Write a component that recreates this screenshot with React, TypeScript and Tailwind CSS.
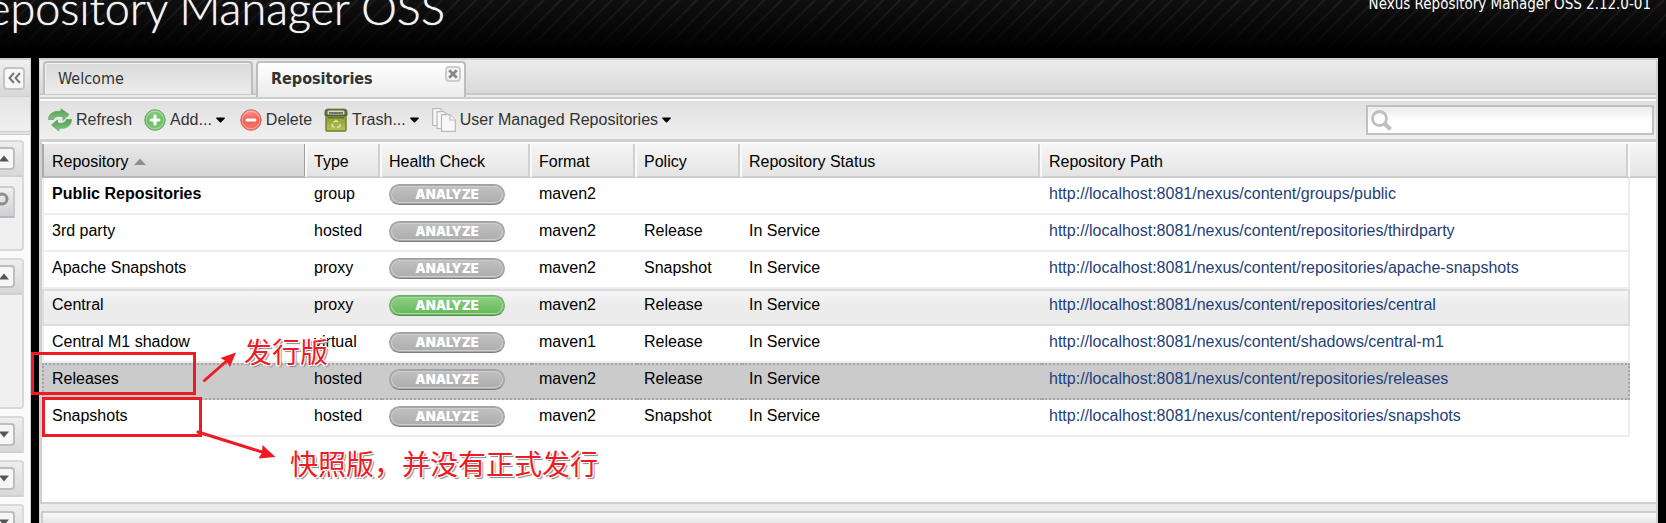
import React from "react";

type Repo = {
  name: string;
  type: string;
  format: string;
  policy: string;
  status: string;
  path: string;
  bold?: boolean;
  analyzable?: boolean;
  look?: "hover" | "selected";
};

const BASE = "http://localhost:8081/nexus/content/";

const repos: Repo[] = [
  { name: "Public Repositories", type: "group", format: "maven2", policy: "", status: "", path: "groups/public", bold: true },
  { name: "3rd party", type: "hosted", format: "maven2", policy: "Release", status: "In Service", path: "repositories/thirdparty" },
  { name: "Apache Snapshots", type: "proxy", format: "maven2", policy: "Snapshot", status: "In Service", path: "repositories/apache-snapshots" },
  { name: "Central", type: "proxy", format: "maven2", policy: "Release", status: "In Service", path: "repositories/central", analyzable: true, look: "hover" },
  { name: "Central M1 shadow", type: "virtual", format: "maven1", policy: "Release", status: "In Service", path: "shadows/central-m1" },
  { name: "Releases", type: "hosted", format: "maven2", policy: "Release", status: "In Service", path: "repositories/releases", look: "selected" },
  { name: "Snapshots", type: "hosted", format: "maven2", policy: "Snapshot", status: "In Service", path: "repositories/snapshots" },
];

const rowLook = {
  plain: "bg-white border-[#ededed]",
  hover: "bg-linear-to-b from-[#f6f6f6] to-[#ececec] to-40% border-[#dddddd] border-t-2",
  selected: "bg-[#cbcbcb] border-[#a5a5a5] border-dotted border-t-2",
};

function Caret() {
  return (
    <svg width="9" height="6" viewBox="0 0 9 6" className="shrink-0" aria-hidden="true">
      <path d="M0 1.2Q0 .5 .8 .5H8.200Q9 .5 9 1.200L4.900 5.600H4.100Z" fill="#000" />
    </svg>
  );
}

function RefreshIcon() {
  return (
    <svg width="24" height="24" viewBox="0 0 24 24" aria-hidden="true">
      <defs>
        <linearGradient id="rf" x1="0" y1="0" x2="0" y2="1">
          <stop offset="0" stopColor="#4f9d55" />
          <stop offset="1" stopColor="#86c684" />
        </linearGradient>
      </defs>
      <g fill="url(#rf)" stroke="#5aa55c" strokeWidth=".7" strokeLinejoin="round">
        <path d="M.5 11.500C.5 5.500 6 2.500 13 3.500V.8L21 6.500L15 12.500V9C10 7.500 7 8.200 5.500 11.500Z" />
        <path d="M23.500 11.500C23.500 18 18 21 11 20.200V23L3.500 17L9.500 11.800V14.800C14 16 17 15 18.500 11.500Z" />
      </g>
    </svg>
  );
}

function RoundIcon({ kind }: { kind: "add" | "delete" }) {
  const add = kind === "add";
  const id = "round-" + kind;
  return (
    <svg width="22" height="24" viewBox="0 0 22 24" aria-hidden="true">
      <defs>
        <linearGradient id={id} x1="0" y1="0" x2="0" y2="1">
          <stop offset="0" stopColor={add ? "#8fce85" : "#f79a90"} />
          <stop offset=".5" stopColor={add ? "#6dbb63" : "#ee5f52"} />
          <stop offset="1" stopColor={add ? "#7cc873" : "#f07a6c"} />
        </linearGradient>
      </defs>
      <circle cx="11" cy="12" r="10.300" fill={`url(#${id})`} stroke={add ? "#67ad62" : "#d8695f"} />
      <circle cx="11" cy="12" r="8.800" fill="none" stroke="#fff" strokeOpacity=".35" strokeWidth="1" />
      <path d={add ? "M7 12H15M11 8V16" : "M7 12H15"} stroke="#fff" strokeWidth="3.200" strokeLinecap="round" />
    </svg>
  );
}

function TrashIcon() {
  return (
    <svg width="24" height="24" viewBox="0 0 24 24" aria-hidden="true">
      <defs>
        <linearGradient id="bin" x1="0" y1="0" x2="0" y2="1">
          <stop offset="0" stopColor="#8a9a38" />
          <stop offset="1" stopColor="#b9c455" />
        </linearGradient>
      </defs>
      <rect x="2" y="8" width="20" height="15" rx="1" fill="url(#bin)" stroke="#6e7d2f" strokeWidth="1.400" />
      <rect x="4" y="9" width="16" height="1.500" fill="#66742b" />
      <path d="M1 7.500V4Q1 1.200 3.500 1.200H20.500Q23 1.200 23 4V7.500Z" fill="#66733a" stroke="#54602c" />
      <rect x="3.500" y="2.500" width="17" height="4" rx="1.500" fill="#d6d8d0" />
      <rect x="5" y="4" width="14" height="2" fill="#6f7270" />
      <g fill="none" stroke="#dfe6a0" strokeWidth="1.400">
        <path d="M9.500 14.500L12 12.500L14.200 14.200M16 16L16 18.300L13 19.300M10.500 19.300L8.200 18.300L8.500 15.800" />
      </g>
    </svg>
  );
}

function PagesIcon() {
  return (
    <svg width="24" height="24" viewBox="0 0 24 24" fill="#f8f8f8" stroke="#b9b9b9" strokeWidth="1.200" aria-hidden="true">
      <path d="M.7 .7H8L11 4V17.500H.7Z" />
      <path d="M5 3.700H12L15.500 7V20.500H5Z" />
      <path d="M9.500 6.700H18L23.300 12V23.300H9.500Z" />
      <path d="M18 6.700V12H23.300" fill="#fff" />
    </svg>
  );
}

function AnalyzeButton({ active }: { active?: boolean }) {
  return (
    <button
      className={
        "flex h-[21px] w-[116px] items-center justify-center rounded-full border font-['Inter',sans-serif] text-[13px] leading-none font-black text-white " +
        (active
          ? "border-[#6fa868] border-b-[#4f8a4a] bg-linear-to-b from-[#8fd085] to-[#62b858] shadow-[inset_0_0_0_1px_#74bd6a,inset_0_0_0_2px_#a4d89b]"
          : "border-[#a0a0a0] border-b-[#7c7c7c] bg-linear-to-b from-[#c2c2c2] to-[#acacac] shadow-[inset_0_0_0_1px_#a9a9a9,inset_0_0_0_2px_#cecece]")
      }
    >
      ANALYZE
    </button>
  );
}

function ToolButton({ icon, label, menu, className }: { icon: React.ReactNode; label: string; menu?: boolean; className: string }) {
  return (
    <button className={"flex items-center text-[#333] " + className}>
      {icon}
      <span>{label}</span>
      {menu && <Caret />}
    </button>
  );
}

function FoldButton({ open }: { open: boolean }) {
  return (
    <button
      aria-label={open ? "Collapse" : "Expand"}
      className="flex h-[23px] w-[22px] shrink-0 items-center justify-center rounded border-2 border-[#bdbdbd] bg-[#f6f6f6]"
    >
      <svg width="10" height="7" viewBox="0 0 10 7" aria-hidden="true">
        <path d={open ? "M0 6.500L5 .5L10 6.500Z" : "M0 .5H10L5 6.500Z"} fill="#555" />
      </svg>
    </button>
  );
}

function SidePanel({ open, children }: { open: boolean; children?: React.ReactNode }) {
  return (
    <section className={"w-[24px] shrink-0 overflow-hidden rounded-tr border-t-2 border-r-2 border-[#d9d9d9] bg-[#f0f0f0] " + (open ? "rounded-br border-b-2" : "")}>
      <header className="flex h-[35px] items-center justify-end border-b-2 border-[#d0d0d0] bg-linear-to-b from-[#eeeeee] to-[#d8d8d8] pr-[7px]">
        <FoldButton open={open} />
      </header>
      {children}
    </section>
  );
}

const headCell =
  "h-[34px] border-r-2 border-b-2 border-r-[#fafafa] border-b-[#cccccc] pt-[3px] pl-[7px] text-left font-normal bg-linear-to-b from-[#f6f6f6] to-[#e4e4e4] shadow-[inset_-2px_0_#d0d0d0]";

export default function App() {
  return (
    <div className="relative flex h-screen flex-col overflow-hidden bg-black font-['Liberation_Sans',Arial,sans-serif] text-[16px] leading-5 text-black">
      <header className="flex h-[58px] shrink-0 justify-between overflow-hidden bg-[linear-gradient(to_bottom,transparent,#000_52px),repeating-linear-gradient(135deg,#1f1f1f_0_1px,#0f0f0f_2px_11px,#1f1f1f_12px)]">
        <div className="flex w-[445px] justify-end overflow-hidden">
          <h1 className="-mt-[22px] font-['Lato',sans-serif] text-[45px] leading-[60px] font-light whitespace-nowrap text-[#f2f2f2] [text-shadow:0_0_1px_#fff]">Nexus Repository Manager OSS</h1>
        </div>
        <p className="-mt-[6px] mr-[15px] font-['DejaVu_Sans_Condensed','Noto_Sans',sans-serif] text-[15px] text-white">Nexus Repository Manager OSS 2.12.0-01</p>
      </header>

      <div className="flex min-h-0 flex-1 gap-2 pr-2">
        <aside className="flex w-[31px] shrink-0 flex-col overflow-hidden border-t-2 border-r border-[#d0d0d0] bg-[#fafafa]">
          <div className="flex h-[37px] shrink-0 items-center justify-end border-b border-[#d0d0d0] bg-linear-to-b from-[#f0f0f0] to-[#d8d8d8] pr-[5px]">
            <button aria-label="Collapse sidebar" className="flex h-[23px] w-[22px] items-center justify-center rounded border-2 border-[#c4c4c4] bg-[#f7f7f7]">
              <svg width="13" height="12" viewBox="0 0 13 12" fill="none" stroke="#777" strokeWidth="2" aria-hidden="true">
                <path d="M6 1L1.500 6L6 11M12 1L7.500 6L12 11" />
              </svg>
            </button>
          </div>
          <div className="h-[38px] shrink-0 border-b-4 border-double border-[#cccccc] bg-linear-to-b from-[#e4e4e4] to-[#f0f0f0]" />
          <div className="flex flex-col gap-[7px] pt-[5px]">
            <SidePanel open>
              <div className="flex h-[72px] justify-end pt-[9px]">
                <button aria-label="Search" className="mr-[7px] flex h-[32px] w-[30px] shrink-0 items-start justify-end rounded-t border-2 border-[#cccccc] border-b-[#b5b8c8] bg-linear-to-b from-[#f0f0f0] to-[#cfcfcf] pt-[4px] pr-[4px]">
                  <svg width="14" height="14" viewBox="0 0 14 14" fill="none" stroke="#8d8d8d" strokeWidth="3" aria-hidden="true">
                    <circle cx="7" cy="7" r="5" />
                  </svg>
                </button>
              </div>
            </SidePanel>
            <SidePanel open>
              <div className="h-[112px]" />
            </SidePanel>
            <SidePanel open={false} />
            <SidePanel open={false} />
            <SidePanel open={false} />
          </div>
        </aside>

        <main className="flex min-w-0 flex-1 flex-col border-t-2 border-r-2 border-l border-[#d0d0d0] bg-[#ebebeb]">
          <div role="tablist" className="flex h-[39px] shrink-0 items-start gap-[3px] border-b-2 border-[#cccccc] bg-[linear-gradient(to_bottom,#ececec,#d9d9d9_33px,#c8c8c8_33px,#c8c8c8_35px,#ebebeb_35px)] pt-[1px] pl-[3px] font-['DejaVu_Sans_Condensed','Noto_Sans',sans-serif] text-[#333]">
            <button role="tab" className="h-[33px] w-[210px] rounded-t border-2 border-b-0 border-[#bdbdbd] bg-linear-to-b from-[#dadada] to-[#ececec] pl-[13px] text-left shadow-[inset_1px_1px_#f2f2f2]">Welcome</button>
            <div className="flex h-[36px] w-[210px] items-start justify-between rounded-t border-2 border-b-0 border-[#bdbdbd] bg-linear-to-b from-white to-[#ebebeb] pr-[3px] pl-[13px]">
              <button role="tab" aria-selected="true" className="h-[31px] font-bold">Repositories</button>
              <button aria-label="Close tab" className="mt-[3px] flex h-[16px] w-[16px] items-center justify-center rounded border-2 border-[#cccccc] bg-[#f4f4f4]">
                <svg width="10" height="10" viewBox="0 0 10 10" stroke="#888" strokeWidth="2.800" aria-hidden="true">
                  <path d="M1.200 1.200L8.800 8.800M8.800 1.200L1.200 8.800" />
                </svg>
              </button>
            </div>
          </div>

          <div className="flex h-[43px] shrink-0 items-center border-t-2 border-b-3 border-t-[#fafafa] border-b-[#d0d0d0] bg-linear-to-b from-[#e0e0e0] to-[#f0f0f0] pr-[2px] pl-[8px]">
            <ToolButton className="gap-[4px]" icon={<RefreshIcon />} label="Refresh" />
            <ToolButton className="ml-[12px] gap-[4px]" icon={<RoundIcon kind="add" />} label="Add..." menu />
            <ToolButton className="ml-[15px] gap-[4px]" icon={<RoundIcon kind="delete" />} label="Delete" />
            <ToolButton className="ml-[12px] gap-[4px]" icon={<TrashIcon />} label="Trash..." menu />
            <ToolButton className="ml-[13px] gap-[4px]" icon={<PagesIcon />} label="User Managed Repositories" menu />
            <label className="ml-auto flex h-[30px] w-[288px] items-center border-2 border-[#c0c0c0] bg-linear-to-b from-[#e9eded] to-white to-50% pl-[3px]">
              <svg width="21" height="21" viewBox="0 0 21 21" fill="none" stroke="#c0c0c0" aria-hidden="true">
                <circle cx="8.500" cy="8.500" r="7" strokeWidth="2.800" />
                <path d="M13.500 13.500L19.500 19.500" strokeWidth="4" />
              </svg>
              <input aria-label="Search repositories" className="min-w-0 flex-1 bg-transparent px-1 outline-none" />
            </label>
          </div>

          <div className="min-h-0 flex-1 overflow-hidden border-b-2 border-l-2 border-[#d0d0d0] bg-white">
            <table className="w-full table-fixed border-separate border-spacing-0 border-t-2 border-[#fafafa] whitespace-nowrap">
              <colgroup>
                <col className="w-[265px]" />
                <col className="w-[75px]" />
                <col className="w-[150px]" />
                <col className="w-[105px]" />
                <col className="w-[105px]" />
                <col className="w-[300px]" />
                <col />
                <col className="w-[26px]" />
              </colgroup>
              <thead>
                <tr>
                  <th aria-sort="ascending" className="h-[34px] border-r-2 border-b-2 border-l-2 border-r-[#fafafa] border-b-[#b8b8b8] border-l-[#aaaaaa] bg-linear-to-b from-[#e9e9e9] to-[#d4d4d4] pt-[3px] pl-[8px] text-left font-normal shadow-[inset_-1px_0_#a0a0a0]">
                    <span className="flex items-center gap-[6px]">
                      Repository
                      <svg width="12" height="7" viewBox="0 0 12 7" aria-hidden="true">
                        <path d="M0 7L6 .5L12 7Z" fill="#8f8f8f" />
                      </svg>
                    </span>
                  </th>
                  <th className={headCell}>Type</th>
                  <th className={headCell}>Health Check</th>
                  <th className={headCell}>Format</th>
                  <th className={headCell}>Policy</th>
                  <th className={headCell}>Repository Status</th>
                  <th className={headCell}>Repository Path</th>
                  <td className="border-b-2 border-b-[#cccccc] bg-linear-to-b from-[#f6f6f6] to-[#e4e4e4]" />
                </tr>
              </thead>
              <tbody>
                {repos.map((r) => {
                  const look = rowLook[r.look ?? "plain"];
                  const cell = "h-[37px] border-b-2 pl-[7px] align-top " + (r.look ? "pt-[4px] " : "pt-[6px] ") + look;
                  return (
                    <tr key={r.name}>
                      <td className={cell + " border-l-2 pl-[8px]" + (r.bold ? " font-bold" : "")}>{r.name}</td>
                      <td className={cell}>{r.type}</td>
                      <td className={cell}>
                        <AnalyzeButton active={r.analyzable} />
                      </td>
                      <td className={cell}>{r.format}</td>
                      <td className={cell}>{r.policy}</td>
                      <td className={cell}>{r.status}</td>
                      <td className={cell + " border-r-2"}>
                        <a href={BASE + r.path} className="text-[#1f4079]">{BASE + r.path}</a>
                      </td>
                      <td />
                    </tr>
                  );
                })}
              </tbody>
            </table>
          </div>
          <div className="mt-[7px] ml-[1px] h-[12px] shrink-0 border-t-2 border-l-2 border-[#cccccc] bg-linear-to-b from-[#fafafa] to-[#e6e6e6]" />
        </main>
      </div>

      <div className="absolute top-[352px] left-[31px] h-[43px] w-[165px] border-3 border-[#ed1c24]" />
      <div className="absolute top-[397px] left-[42px] h-[40px] w-[160px] border-3 border-[#ed1c24]" />
      <svg className="absolute top-[345px] left-[190px]" width="100" height="125" viewBox="190 345 100 125" fill="#ed1c24" stroke="#ed1c24" aria-hidden="true">
        <path d="M204.500 380.500L226 361.500" strokeWidth="3" strokeLinecap="round" />
        <path d="M236 352.500L230 367L226.500 361.500L220.500 358Z" stroke="none" />
        <path d="M198 432L262 452" strokeWidth="3" strokeLinecap="round" />
        <path d="M275.500 457L258.500 458.500L262 452.500L262.500 445Z" stroke="none" />
      </svg>
      <p className="absolute top-[335px] left-[244px] font-['Noto_Sans_CJK_SC',sans-serif] text-[28px] leading-8 whitespace-nowrap text-[#ed1c24] [text-shadow:-1px_-1px_#fff,1px_-1px_#fff,-1px_1px_#fff,1px_1px_#fff,2px_2px_1px_#888]">发行版</p>
      <p className="absolute top-[447px] left-[290px] font-['Noto_Sans_CJK_SC',sans-serif] text-[28px] leading-8 whitespace-nowrap text-[#ed1c24] [text-shadow:-1px_-1px_#fff,1px_-1px_#fff,-1px_1px_#fff,1px_1px_#fff,2px_2px_1px_#888]">快照版，并没有正式发行</p>
    </div>
  );
}
